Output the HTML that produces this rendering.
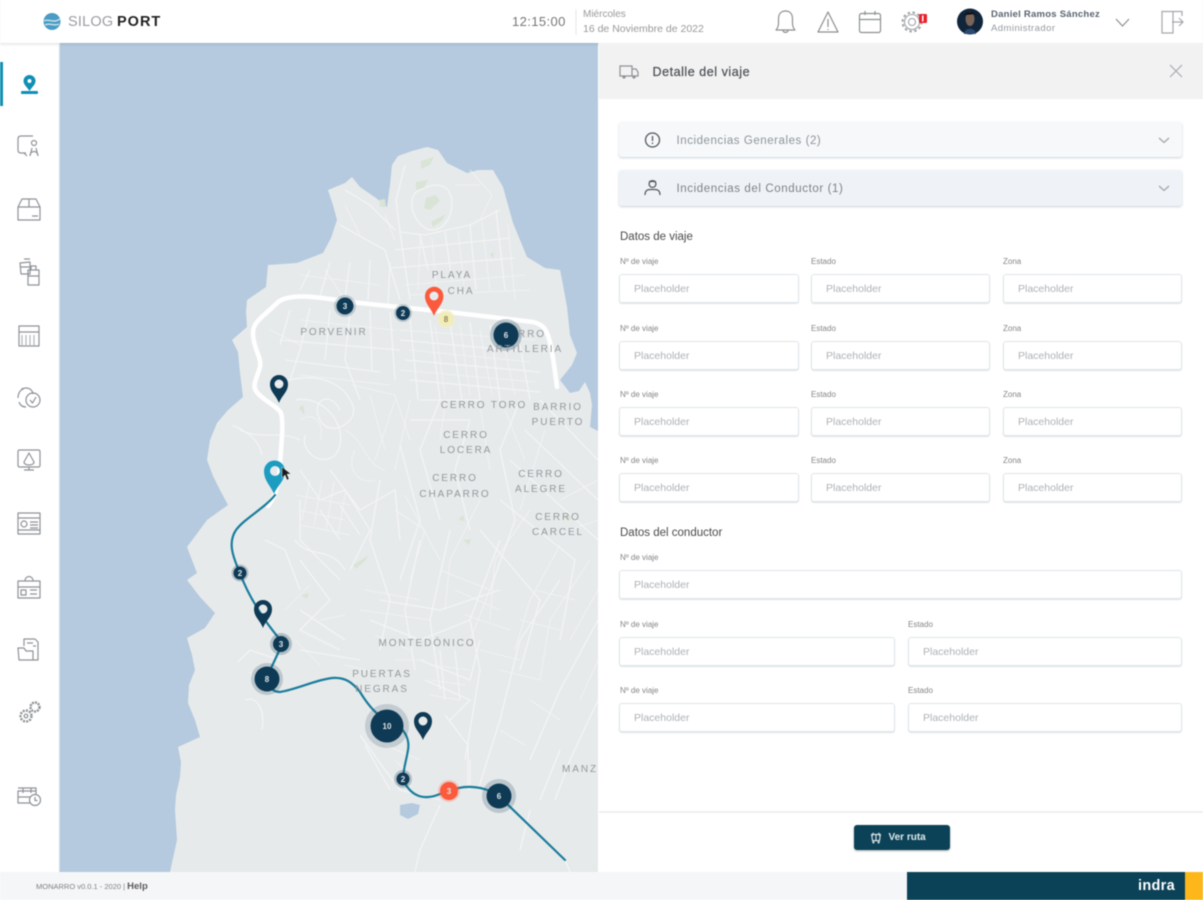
<!DOCTYPE html>
<html lang="es">
<head>
<meta charset="utf-8">
<title>Silogport</title>
<style>
html,body{margin:0;padding:0;width:1203px;height:900px;overflow:hidden;background:#fff}
body{font-family:"Liberation Sans",sans-serif;color:#555;position:relative}
#wrap{position:absolute;left:0;top:0;width:1203px;height:900px;filter:blur(.6px);background:#fff}
.t{position:absolute;white-space:nowrap;line-height:1}
.inp{position:absolute;box-sizing:border-box;height:29px;border:1px solid #dfe6ea;border-radius:3px;background:#fff;font-size:10.5px;color:#adb2b6;line-height:28.5px;padding-left:14px;box-shadow:0 1px 1px rgba(180,195,205,.45)}
.lab{position:absolute;font-size:8px;color:#858585;line-height:1;white-space:nowrap;margin-top:1px}
.acc{position:absolute;left:619px;width:563px;box-sizing:border-box;border-radius:3px;box-shadow:0 1px 2px rgba(150,165,180,.5)}
.h3{position:absolute;left:620px;font-size:11.5px;color:#4a4a4a;line-height:1;white-space:nowrap;margin-top:1px}
svg{position:absolute;overflow:visible}
.mp{font-family:"Liberation Sans",sans-serif;font-size:10px;letter-spacing:1.9px;fill:#94989b;text-anchor:middle}
.n{font-family:"Liberation Sans",sans-serif;font-size:8px;font-weight:bold;fill:#dfe4e7;text-anchor:middle}
</style>
</head>
<body>
<div id="wrap">

<!-- MAP -->
<svg style="left:0;top:0" width="1203" height="900" viewBox="0 0 1203 900">
  <defs><clipPath id="mc"><rect x="60" y="43" width="538" height="829"/></clipPath></defs>
  <g clip-path="url(#mc)">
    <rect x="60" y="43" width="538" height="829" fill="#b5cadf"/>
    <path fill="#e7eaeb" d="M427 147L412 151L398 156L392 165L390 185L387 207L376 198L360 187L352 177L345 183L328 190L333 205L337 220L331 238L323 253L297 263L268 265L266 287L247 300L246 312L247 327L232 340L238 352L240 373L243 397L228 410L217 423L210 440L207 460L213 476L220 490L228 505L207 520L196 535L187 547L192 560L197 573L187 580L200 597L215 613L205 628L187 638L192 655L195 670L189 685L188 703L195 720L200 737L178 747L181 762L180 777L176 795L175 810L177 840L170 872L598 872L598 431L590 427L592 405L590 393L585 382L579 391L570 393L560 380L572 365L577 353L570 335L567 307L563 285L560 270L545 268L527 257L520 240L513 223L508 205L503 187L493 170L478 170L467 173L447 163L438 150Z"/>
    <!-- pond -->
    <path fill="#b5cadf" d="M400 805L412 803L420 805L418 814L408 819L400 815Z"/>
    <!-- greens -->
    <g fill="#d9e4d6">
      <path d="M421 161L434 157L430 165L421 169Z"/>
      <path d="M416 182L428 180L424 188L416 190Z"/>
      <path d="M426 198L436 195L440 201L430 210L424 208Z"/>
      <path d="M431 222L446 214L442 221L433 227Z"/>
      <path d="M379 200L385 199L386 207L380 207Z"/>
      <path d="M490 254L494 252L493 259Z"/>
      <path d="M299 408L303 405L305 415L302 412Z"/>
      <path d="M353 565L369 555L365 561L356 569Z"/>
      <path d="M301 595L309 593L307 599Z"/>
      <path d="M458 520L463 515L465 521Z"/>
      <path d="M562 516L573 514L569 521Z"/>
      <path d="M463 540L471 539L469 545Z"/>
    </g>
    <!-- streets -->
    <g fill="none" stroke="#f5f6f7" stroke-width="1.100" opacity=".95">
      <path d="M405 165L396 200L400 232L425 235L470 225L500 210"/>
      <path d="M420 190C405 195 412 225 430 230C448 232 458 205 448 190C440 182 430 185 420 190Z"/>
      <path d="M420 235L428 270M445 232L452 280M470 225L476 290M496 210L505 290M400 232L410 300"/>
      <path d="M395 250L510 238M390 268L515 258M345 190L370 205L395 230M340 225L385 250L400 300"/>
      <path d="M310 270L300 290M330 262L320 296M350 262L345 298M370 260L368 300M390 262L388 304"/>
      <path d="M290 310L280 345M310 308L300 350L290 380M330 310L325 360M350 312L345 360L360 400M370 310L372 370M390 312L395 380M410 318L418 400M430 320L440 400M450 322L462 400M470 322L480 400M490 325L500 400M520 345L530 400"/>
      <path d="M280 340L400 350M285 360L380 372M400 340L530 352M405 360L540 372M410 380L540 392M275 385C310 370 340 380 350 400C365 420 330 440 320 420C310 400 330 390 340 410"/>
      <path d="M296 400C320 395 345 420 340 445C335 470 300 460 305 435M300 440C280 430 260 440 240 430M232 425C255 435 260 445 262 455"/>
      <path d="M420 400L480 400M410 420L470 420M400 445L420 520L400 580M440 400L420 450L440 520M470 420L455 470L470 530M520 400L500 450L515 520L490 590"/>
      <path d="M540 400L598 460M525 430L598 500M510 460L598 540M500 500L575 560L560 640M480 530L540 600L520 670"/>
      <path d="M300 470L320 500L345 490L370 530L350 570M330 470L360 510L395 490L400 540M300 500L300 540L340 580M320 510L340 540M340 505L360 535M295 540C310 560 330 545 345 570"/>
      <path d="M380 480L370 540L390 600L380 650M420 540L405 610L415 670M450 530L430 620L440 690M500 540L470 620L480 670L465 760M560 580L520 640L500 720L478 790M598 620L560 690L530 760"/>
      <path d="M300 560L330 600L300 630L340 650M265 540L285 550L300 590M300 610L345 640M300 650L360 660M370 620L420 640L470 620M380 600L440 610L500 590"/>
      <path d="M420 660L470 680L480 640M425 680L470 700L450 720M440 650L445 700M455 650L460 700"/>
      <path d="M238 662L250 650L280 660M245 700C260 695 265 715 262 730M250 672L262 690"/>
      <path d="M360 735L385 770L400 790L440 800M365 745L390 790M440 805L420 850L415 872M470 760L470 790M445 715L468 745L468 790"/>
      <path d="M530 810L520 850M560 750L540 800M598 700L570 760L555 800M565 860L570 872"/>
    </g>
    <g fill="none" stroke="#f4f5f6" stroke-width=".8" opacity=".85">
      <path d="M420 240L418 290M432 238L436 285M458 230L464 285M482 222L490 290M508 225L515 300M405 285L525 275M410 295L530 290"/>
      <path d="M470 170L492 195L480 220M455 185L480 185M385 215L395 240M345 205L360 235M325 270L345 300M300 275L380 285"/>
      <path d="M300 320L395 330M270 330L300 345M300 375L390 385M400 330L535 340M400 370L535 382M410 350L530 362M435 325L445 395M460 325L470 395M480 330L492 395M505 350L515 395"/>
      <path d="M352 385L395 395L410 440M370 395L385 450M395 400L375 460M410 400L395 470M445 405L440 440M480 405L490 470M505 410L525 460M545 430L520 510"/>
      <path d="M345 430C365 440 365 465 385 470M355 450C345 470 360 485 375 480M300 420C315 410 325 425 320 440"/>
      <path d="M310 480L302 520M322 480L314 525M334 482L326 530M346 490L338 535M296 495L350 505M298 510L345 520M300 525L350 535"/>
      <path d="M395 510L425 530L410 580M405 495L440 560M480 500L450 560L445 610M530 510L495 560L490 620M560 545L530 600L515 650M590 560L550 620L540 680M598 590L570 640"/>
      <path d="M440 570L490 590L470 640M455 590L500 610M465 615L510 630M480 650L520 660M500 670L540 680M520 620L560 630M535 590L575 600"/>
      <path d="M365 590L420 600M360 610L430 620M375 635L410 650M395 660L425 660M430 665L470 670M430 680L465 685M430 695L460 700"/>
      <path d="M310 585L285 610M320 620L345 615M295 640L320 665M345 665L375 672"/>
      <path d="M385 745L420 760M395 760L405 770M598 480L560 500M598 520L570 530M598 660L580 700M500 730L525 745M530 700L560 720"/>
    </g>
    <!-- white route -->
    <path fill="none" stroke="#fff" stroke-width="4.500" stroke-linecap="round" stroke-linejoin="round" d="M557 387C554 365 552 345 547 333C544 326 540 324 533 322L457 313L360 303C335 300 310 295 293 297C285 298 280 300 277 303C262 318 252 322 253 335C254 350 262 358 260 367C257 378 252 385 256 391C262 400 276 405 281 413C284 425 281 445 280 465C279 480 277 495 268 506"/>
    <!-- blue route -->
    <path fill="none" stroke="#1a7d9c" stroke-width="2.200" stroke-linecap="round" stroke-linejoin="round" d="M275 495C265 508 245 518 236 530C228 542 232 555 240 573C246 590 255 605 263 617C270 628 277 635 282 643C278 655 272 665 267 677C268 686 272 692 280 692C298 689 315 680 332 678C345 677 352 682 360 692C368 705 378 718 392 722C404 728 410 738 408 750C406 762 403 770 403 780C408 790 416 798 428 797C436 797 442 792 450 791C462 785 478 786 490 791C496 793 500 796 505 802L565 860"/>
    <!-- pins -->
    <path fill="#0f3a55" fill-rule="evenodd" d="M279 403C276 395 270 392 270 384A9 9 0 1 1 288 384C288 392 282 395 279 403ZM279 379.500A4.500 4.500 0 1 0 279 388.500A4.500 4.500 0 1 0 279 379.500Z"/>
    <path fill="#0f3a55" fill-rule="evenodd" d="M263 628C260 620 254 617 254 609A9 9 0 1 1 272 609C272 617 266 620 263 628ZM263 604.500A4.500 4.500 0 1 0 263 613.500A4.500 4.500 0 1 0 263 604.500Z"/>
    <path fill="#0f3a55" fill-rule="evenodd" d="M423 740C420 732 414 729 414 721A9 9 0 1 1 432 721C432 729 426 732 423 740ZM423 716.500A4.500 4.500 0 1 0 423 725.500A4.500 4.500 0 1 0 423 716.500Z"/>
    <path fill="#fb5a3c" fill-rule="evenodd" d="M434 316C431 308 425 304 425 296A9.200 9.200 0 1 1 443.400 296C443.400 304 437 308 434 316ZM434 291.500A4.500 4.500 0 1 0 434 300.500A4.500 4.500 0 1 0 434 291.500Z"/>
    <path fill="#1d9cc2" fill-rule="evenodd" d="M274 494C271 486 264 481 264 471A10.500 10.500 0 1 1 285 471C285 481 277 486 274 494ZM275 466A5 5 0 1 0 275 476A5 5 0 1 0 275 466Z"/>
    <!-- cursor -->
    <path fill="#1a1a1a" stroke="#fff" stroke-width=".4" d="M282 467L282 478L285 475L287 480L289 479L287 474L291 474Z"/>
    <!-- clusters -->
    <g fill="#0f3a55">
      <circle cx="345" cy="306" r="11" opacity=".2"/><circle cx="345" cy="306" r="8.500"/>
      <circle cx="403" cy="313" r="9" opacity=".2"/><circle cx="403" cy="313" r="7"/>
      <circle cx="506" cy="335" r="16" opacity=".25"/><circle cx="506" cy="335" r="12.500"/>
      <circle cx="240" cy="573" r="8.500" opacity=".25"/><circle cx="240" cy="573" r="6.500"/>
      <circle cx="281" cy="644" r="11" opacity=".25"/><circle cx="281" cy="644" r="8"/>
      <circle cx="267" cy="679" r="16" opacity=".2"/><circle cx="267" cy="679" r="12.500"/>
      <circle cx="387" cy="726" r="22" opacity=".17"/><circle cx="387" cy="726" r="16.500"/>
      <circle cx="403" cy="779" r="9" opacity=".25"/><circle cx="403" cy="779" r="6.500"/>
      <circle cx="499" cy="796" r="17" opacity=".2"/><circle cx="499" cy="796" r="12.500"/>
    </g>
    <circle cx="446" cy="319" r="9" fill="#f1edc4" opacity=".6"/><circle cx="446" cy="319" r="7.500" fill="#f2ecb6"/>
    <circle cx="449" cy="791" r="11" fill="#fb5a3c" opacity=".25"/><circle cx="449" cy="791" r="9" fill="#fb5a3c"/>
    <g>
      <text class="n" x="345" y="309">3</text>
      <text class="n" x="403" y="316">2</text>
      <text class="n" x="506" y="338">6</text>
      <text class="n" x="446" y="322" style="fill:#8f8a60">8</text>
      <text class="n" x="240" y="576">2</text>
      <text class="n" x="281" y="647">3</text>
      <text class="n" x="267" y="682">8</text>
      <text class="n" x="387" y="729">10</text>
      <text class="n" x="403" y="782">2</text>
      <text class="n" x="449" y="794">3</text>
      <text class="n" x="499" y="799">6</text>
    </g>
    <!-- labels -->
    <text class="mp" x="452" y="278">PLAYA</text>
    <text class="mp" x="461" y="294">CHA</text>
    <text class="mp" x="334" y="335">PORVENIR</text>
    <text class="mp" x="532" y="337">RRO</text>
    <text class="mp" x="525" y="352">ARTILLERIA</text>
    <text class="mp" x="484" y="408">CERRO TORO</text>
    <text class="mp" x="558" y="410">BARRIO</text>
    <text class="mp" x="558" y="425">PUERTO</text>
    <text class="mp" x="466" y="438">CERRO</text>
    <text class="mp" x="466" y="453">LOCERA</text>
    <text class="mp" x="455" y="481">CERRO</text>
    <text class="mp" x="455" y="497">CHAPARRO</text>
    <text class="mp" x="541" y="477">CERRO</text>
    <text class="mp" x="541" y="492">ALEGRE</text>
    <text class="mp" x="558" y="520">CERRO</text>
    <text class="mp" x="558" y="535">CARCEL</text>
    <text class="mp" x="427" y="646">MONTEDÓNICO</text>
    <text class="mp" x="382" y="677">PUERTAS</text>
    <text class="mp" x="382" y="692">NEGRAS</text>
    <text class="mp" x="580" y="772">MANZ</text>
  </g>
</svg>

<!-- HEADER -->
<div style="position:absolute;left:0;top:0;width:1203px;height:43px;background:#fff;box-shadow:0 1px 3px rgba(0,0,0,.14)"></div>
<svg style="left:0;top:0" width="1203" height="43" viewBox="0 0 1203 43">
  <circle cx="52" cy="21.500" r="8.500" fill="#4a9cc4"/>
  <path d="M44 21C48 18 53 24 60 19M45 25C50 22 54 27 59 24" fill="none" stroke="#d6e9f2" stroke-width="1.300"/>
  <line x1="576" y1="9" x2="576" y2="35" stroke="#e6e6e6"/>
  <!-- bell -->
  <path d="M776 30C779 27 778.500 23 778.500 19C778.500 14 781 11 785.500 11C790 11 792.500 14 792.500 19C792.500 23 792 27 795 30Z M783 30.500C783.500 33 787.500 33 788 30.500" fill="none" stroke="#8c8f92" stroke-width="1.200" stroke-linejoin="round"/>
  <!-- warning -->
  <path d="M828 12L838 32L818 32Z" fill="none" stroke="#8c8f92" stroke-width="1.200" stroke-linejoin="round"/>
  <path d="M828 19L828 27M828 29L828 30" stroke="#8c8f92" stroke-width="1.200"/>
  <!-- calendar -->
  <rect x="859.500" y="13.500" width="21" height="19" rx="2" fill="none" stroke="#8c8f92" stroke-width="1.200"/>
  <path d="M859.500 19.500H880.500M865 11V15M875 11V15" stroke="#8c8f92" stroke-width="1.200"/>
  <!-- gear -->
  <circle cx="912" cy="22" r="7.500" fill="none" stroke="#a0a3a6" stroke-width="1.100"/>
  <circle cx="912" cy="22" r="3.500" fill="none" stroke="#a0a3a6" stroke-width="1.100"/>
  <circle cx="912" cy="22" r="9.500" fill="none" stroke="#a0a3a6" stroke-width="2" stroke-dasharray="2.500 2.500"/>
  <rect x="919" y="14" width="8" height="9" rx="1" fill="#e8202c"/>
  <rect x="922" y="15.500" width="1.500" height="6" fill="#fff"/>
  <!-- avatar -->
  <circle cx="970" cy="21.500" r="13" fill="#10253a"/>
  <ellipse cx="970" cy="19" rx="4.500" ry="7" fill="#7a6458"/>
  <path d="M964 34C964 27 976 27 976 34Z" fill="#2a4a70"/>
  <path d="M964 16C966 11 975 11 976 16L975 14L965 15Z" fill="#0c0c0e"/>
  <!-- chevron -->
  <path d="M1116 19L1122.500 26L1129 19" fill="none" stroke="#8c8f92" stroke-width="1.200"/>
  <!-- logout -->
  <path d="M1182 16V11.500H1162V33H1173L1173 11.500M1173 33H1162" fill="none" stroke="#a5a8aa" stroke-width="1.200"/>
  <path d="M1172 22H1183M1179 18L1183 22L1179 26" fill="none" stroke="#a5a8aa" stroke-width="1.200"/>
</svg>
<div class="t" style="left:68px;top:15px;font-size:14.500px;color:#9a9da0;letter-spacing:.2px">SILOG</div>
<div class="t" style="left:117px;top:15px;font-size:14.500px;font-weight:bold;color:#222;letter-spacing:1px">PORT</div>
<div class="t" style="left:512px;top:15px;font-size:13px;color:#777;letter-spacing:.4px">12:15:00</div>
<div class="t" style="left:583px;top:10px;font-size:10px;color:#999">Miércoles</div>
<div class="t" style="left:583px;top:24px;font-size:10.500px;color:#999">16 de Noviembre de 2022</div>
<div class="t" style="left:991px;top:10px;font-size:9.500px;font-weight:bold;color:#5a6470;letter-spacing:.25px">Daniel Ramos Sánchez</div>
<div class="t" style="left:991px;top:24px;font-size:9.500px;color:#94999e;letter-spacing:.45px">Administrador</div>

<!-- SIDEBAR -->
<div style="position:absolute;left:59px;top:43px;width:1px;height:829px;background:#cfdcea"></div>
<div style="position:absolute;left:0;top:62px;width:2.500px;height:44px;background:#0f8fb3"></div>
<svg style="left:0;top:43px" width="60" height="829" viewBox="0 43 60 829">
  <!-- active map -->
  <path fill="#0f8fb3" fill-rule="evenodd" d="M29.500 91C27 87 23.500 84.500 23.500 81A6 6 0 1 1 35.500 81C35.500 84.500 32 87 29.500 91ZM29.500 79A2 2 0 1 0 29.500 83A2 2 0 1 0 29.500 79Z"/>
  <rect x="21" y="91" width="17" height="3" rx="1" fill="#0f8fb3"/>
  <g fill="none" stroke="#8e9397" stroke-width="1.200" stroke-linejoin="round">
    <!-- 146 -->
    <path d="M33 136H21C19 136 18 137 18 139V150C18 152 19 153 21 153H26M24 153L27 156"/>
    <circle cx="34" cy="143" r="2.500"/><path d="M30 156C30 150 38 150 38 156M32 148L30 156M36 148L38 156"/>
    <!-- 210 -->
    <path d="M18 207L22 199H36L40 207V220H18ZM18 207H40M29 199V207M32 216H38"/>
    <!-- 272 -->
    <path d="M20 263L30 262V274H21ZM20 267H30M24 259H30M28 270H39V285H28ZM28 276H39M31 270V266H36V270"/>
    <!-- 335 -->
    <path d="M19 326H39V346H19ZM19 332H39"/>
    <path d="M22 335V346M26 335V346M30 335V346M34 335V346" stroke="#b0b4b7"/>
    <!-- 398 -->
    <path d="M26 388C31 388 33 392 33 394M23 390L22 388M18 398C18 392 22 388 26 388M19 402C20 405 22 407 26 407"/>
    <circle cx="33" cy="400" r="7"/><path d="M30 400L32.500 403L36 397"/>
    <!-- 460 -->
    <rect x="18" y="450" width="22" height="17" rx="1.500"/>
    <path d="M24 470H34M29 467V470M29 453L34 462C34 466 24 466 24 462Z"/>
    <!-- 524 -->
    <path d="M18 513H40V534H18ZM18 518H40M18 530H40"/>
    <circle cx="24" cy="524" r="3"/><path d="M30 522H38M30 525H38M30 528H38"/>
    <!-- 587 -->
    <path d="M18 581H40V598H18ZM18 587H40M25 581C25 575 33 575 33 581"/><rect x="21" y="590" width="5" height="5"/><path d="M30 590H37M30 594H37"/>
    <!-- 649 -->
    <path d="M24 646V639H35L38 642V660H33M24 648H18L19 660H33V651H26L24 648Z"/><path d="M27 643H33M33 646H36"/>
    <!-- 712 -->
    <circle cx="35" cy="707" r="4.500" stroke-width="2.400" stroke-dasharray="2 1"/>
    <circle cx="26" cy="716" r="5.500" stroke-width="2.400" stroke-dasharray="2 1.200"/>
    <circle cx="26" cy="716" r="1.800"/>
    <!-- 795 -->
    <path d="M18 791H36V803H18ZM18 797H30M23 788V793M31 788V793M18 788H36V791"/>
    <circle cx="35" cy="800" r="5.500" fill="#fff"/><path d="M35 797V800.500H37.500"/>
  </g>
</svg>

<!-- PANEL -->
<div style="position:absolute;left:599px;top:43px;width:604px;height:829px;background:#fff"></div>
<div style="position:absolute;left:599px;top:43px;width:604px;height:56px;background:#f2f2f2"></div>
<svg style="left:599px;top:43px" width="604" height="56" viewBox="599 43 604 56">
  <path d="M620 66H632V76H620ZM632 69H636L638 72V76H632" fill="none" stroke="#8e9296" stroke-width="1.200"/>
  <circle cx="624" cy="77" r="1.600" fill="#8e9296"/><circle cx="634" cy="77" r="1.600" fill="#8e9296"/>
  <path d="M1170 65L1182 77M1182 65L1170 77" stroke="#a8acaf" stroke-width="1.200"/>
</svg>
<div class="t" style="left:652.500px;top:66px;font-size:12.500px;color:#4e5358;letter-spacing:.55px;-webkit-text-stroke:.25px #4e5358">Detalle del viaje</div>

<div class="acc" style="top:122px;height:35px;background:#f6f8fa"></div>
<div class="acc" style="top:170px;height:36px;background:#eff3f7"></div>
<svg style="left:619px;top:122px" width="563" height="90" viewBox="619 122 563 90">
  <circle cx="652.500" cy="140" r="7" fill="none" stroke="#55595d" stroke-width="1.300"/>
  <path d="M652.500 136V141M652.500 142.500V144" stroke="#55595d" stroke-width="1.300"/>
  <circle cx="652.500" cy="184" r="3.400" fill="none" stroke="#55595d" stroke-width="1.300"/>
  <path d="M645 195C645 189 649 189.500 652.500 189.500C656 189.500 660 189 660 195M649 181.500H656" fill="none" stroke="#55595d" stroke-width="1.300"/>
  <path d="M1159 138L1164 142.500L1169 138M1159 186L1164 190.500L1169 186" fill="none" stroke="#9fa4a8" stroke-width="1.200"/>
</svg>
<div class="t" style="left:676.500px;top:136px;font-size:11.500px;color:#8f9499;letter-spacing:.55px">Incidencias Generales (2)</div>
<div class="t" style="left:676.500px;top:184px;font-size:11.500px;color:#7d8287;letter-spacing:.6px">Incidencias del Conductor (1)</div>

<div class="h3" style="top:231px">Datos de viaje</div>

<div class="lab" style="left:620px;top:257px">Nº de viaje</div><div class="lab" style="left:811px;top:257px">Estado</div><div class="lab" style="left:1003px;top:257px">Zona</div>
<div class="inp" style="left:619px;top:274px;width:180px">Placeholder</div><div class="inp" style="left:811px;top:274px;width:179px">Placeholder</div><div class="inp" style="left:1003px;top:274px;width:179px">Placeholder</div>

<div class="lab" style="left:620px;top:324px">Nº de viaje</div><div class="lab" style="left:811px;top:324px">Estado</div><div class="lab" style="left:1003px;top:324px">Zona</div>
<div class="inp" style="left:619px;top:341px;width:180px">Placeholder</div><div class="inp" style="left:811px;top:341px;width:179px">Placeholder</div><div class="inp" style="left:1003px;top:341px;width:179px">Placeholder</div>

<div class="lab" style="left:620px;top:390px">Nº de viaje</div><div class="lab" style="left:811px;top:390px">Estado</div><div class="lab" style="left:1003px;top:390px">Zona</div>
<div class="inp" style="left:619px;top:407px;width:180px">Placeholder</div><div class="inp" style="left:811px;top:407px;width:179px">Placeholder</div><div class="inp" style="left:1003px;top:407px;width:179px">Placeholder</div>

<div class="lab" style="left:620px;top:456px">Nº de viaje</div><div class="lab" style="left:811px;top:456px">Estado</div><div class="lab" style="left:1003px;top:456px">Zona</div>
<div class="inp" style="left:619px;top:473px;width:180px">Placeholder</div><div class="inp" style="left:811px;top:473px;width:179px">Placeholder</div><div class="inp" style="left:1003px;top:473px;width:179px">Placeholder</div>

<div class="h3" style="top:527px">Datos del conductor</div>

<div class="lab" style="left:620px;top:553px">Nº de viaje</div>
<div class="inp" style="left:619px;top:570px;width:563px">Placeholder</div>

<div class="lab" style="left:620px;top:620px">Nº de viaje</div><div class="lab" style="left:908px;top:620px">Estado</div>
<div class="inp" style="left:619px;top:637px;width:276px">Placeholder</div><div class="inp" style="left:908px;top:637px;width:274px">Placeholder</div>

<div class="lab" style="left:620px;top:686px">Nº de viaje</div><div class="lab" style="left:908px;top:686px">Estado</div>
<div class="inp" style="left:619px;top:703px;width:276px">Placeholder</div><div class="inp" style="left:908px;top:703px;width:274px">Placeholder</div>

<div style="position:absolute;left:599px;top:811px;width:604px;height:2px;background:#efefef"></div>

<div style="position:absolute;left:854px;top:825px;width:96px;height:25px;background:#0c4257;border-radius:3px;box-shadow:0 1px 2px rgba(0,0,0,.3)"></div>
<svg style="left:869px;top:831px" width="14" height="14" viewBox="0 0 16 16">
  <path d="M3 4H13L12 11H4ZM5 2L3.500 6M11 2L12.500 6M8 4V11" fill="none" stroke="#d7e0e4" stroke-width="1.300"/>
  <circle cx="5" cy="13" r="1.300" fill="#d7e0e4"/><circle cx="11" cy="13" r="1.300" fill="#d7e0e4"/>
</svg>
<div class="t" style="left:888.500px;top:833px;font-size:10px;font-weight:bold;color:#dfe8eb">Ver ruta</div>

<!-- FOOTER -->
<div style="position:absolute;left:0;top:872px;width:1203px;height:28px;background:#f5f6f8"></div>
<div class="t" style="left:36px;top:882px;font-size:7.500px;color:#808080">MONARRO v0.0.1 - 2020 | <b style="font-size:9.500px;color:#5a5a5a">Help</b></div>
<div style="position:absolute;left:907px;top:872px;width:278px;height:28px;background:#0c4257"></div>
<div style="position:absolute;left:1185px;top:872px;width:18px;height:28px;background:#fdb71a"></div>
<div class="t" style="left:1138px;top:879px;font-size:14.500px;font-weight:bold;color:#fff;letter-spacing:.3px">indra</div>

</div>
</body>
</html>
